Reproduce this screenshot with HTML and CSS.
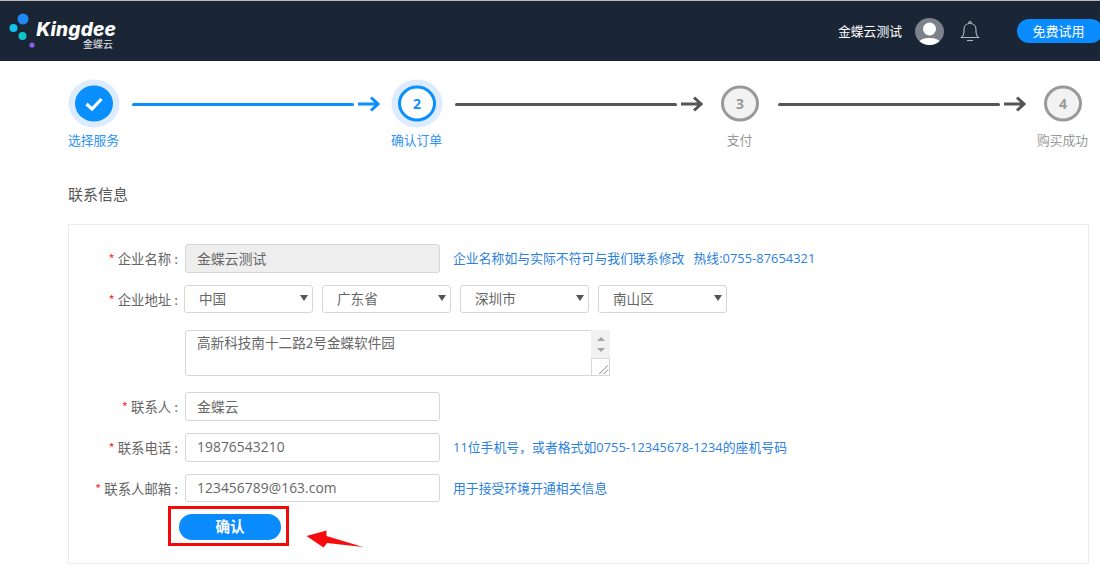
FILE: index.html
```html
<!DOCTYPE html>
<html lang="zh-CN">
<head>
<meta charset="utf-8">
<title>确认订单</title>
<link rel="stylesheet" href="styles.css">
</head>
<body>
<header class="topbar">
  <div class="brand">
    <svg class="brand-dots" width="36" height="41" viewBox="0 0 36 41">
      <circle cx="22" cy="11" r="5.5" fill="#2088f2"/>
      <circle cx="12.500" cy="20" r="4" fill="#0fc4f0"/>
      <circle cx="21.500" cy="28" r="4" fill="#0cc7c9"/>
      <circle cx="31" cy="37" r="2.600" fill="#8a5cf0"/>
    </svg>
    <div class="brand-text">
      <span class="brand-name">Kingdee</span>
      <span class="brand-sub">金蝶云</span>
    </div>
  </div>
  <div class="topbar-right">
    <span class="user-name">金蝶云测试</span>
    <svg class="avatar" width="29" height="27" viewBox="0 0 29 27">
      <defs><clipPath id="av"><ellipse cx="14.500" cy="13.500" rx="14.500" ry="13.500"/></clipPath></defs>
      <ellipse cx="14.500" cy="13.500" rx="14.500" ry="13.500" fill="#7c818b"/>
      <g clip-path="url(#av)" fill="#fff">
        <circle cx="14.500" cy="11" r="6.500"/>
        <ellipse cx="14.500" cy="25" rx="11" ry="5"/>
      </g>
    </svg>
    <svg class="bell" width="20" height="21" viewBox="0 0 20 21" fill="none" stroke="#b4b8be" stroke-width="1.100">
      <path d="M1.500 16.500c1.500-1.200 2.500-2.700 2.500-5.500V8.500C4 5 6.500 2.500 10 2.500s6 2.500 6 6V11c0 2.800 1 4.300 2.500 5.500z"/>
      <path d="M8.700 2.500V1.700c0-.6.600-1.100 1.300-1.100s1.300.5 1.300 1.100v.8"/>
      <path d="M7 19.500h6"/>
    </svg>
    <button class="trial-btn" type="button">免费试用</button>
  </div>
</header>

<main class="content">
  <ol class="stepper">
    <li class="step step-active">
      <svg class="step-icon" width="52" height="49" viewBox="0 0 52 49">
        <ellipse cx="26" cy="24.500" rx="25.500" ry="24" fill="#dcecfe"/>
        <ellipse cx="26" cy="24.500" rx="19" ry="18" fill="#0a8fff"/>
        <path d="M18.500 25l5.500 5 9.500-10" fill="none" stroke="#fff" stroke-width="3.200"/>
      </svg>
      <span class="step-label">选择服务</span>
    </li>
    <li class="connector connector-blue">
      <span class="connector-line"></span>
      <svg width="22" height="16" viewBox="0 0 22 16" fill="none" stroke="currentColor" stroke-width="3"><path d="M0 8h20M13 1.500L20 8l-7 6.500"/></svg>
    </li>
    <li class="step step-active">
      <svg class="step-icon" width="52" height="49" viewBox="0 0 52 49">
        <ellipse cx="26" cy="24.500" rx="25.500" ry="24" fill="#dcecfe"/>
        <ellipse cx="26" cy="24.500" rx="17.500" ry="16.500" fill="#fff" stroke="#0a8fff" stroke-width="3"/>
        <text x="26" y="29.500" class="step-num step-num-blue">2</text>
      </svg>
      <span class="step-label">确认订单</span>
    </li>
    <li class="connector">
      <span class="connector-line"></span>
      <svg width="22" height="16" viewBox="0 0 22 16" fill="none" stroke="currentColor" stroke-width="3"><path d="M0 8h20M13 1.500L20 8l-7 6.500"/></svg>
    </li>
    <li class="step">
      <svg class="step-icon" width="52" height="49" viewBox="0 0 52 49">
        <ellipse cx="26" cy="24.500" rx="17.500" ry="16.500" fill="#f2f2f2" stroke="#999" stroke-width="3"/>
        <text x="26" y="29.500" class="step-num">3</text>
      </svg>
      <span class="step-label">支付</span>
    </li>
    <li class="connector">
      <span class="connector-line"></span>
      <svg width="22" height="16" viewBox="0 0 22 16" fill="none" stroke="currentColor" stroke-width="3"><path d="M0 8h20M13 1.500L20 8l-7 6.500"/></svg>
    </li>
    <li class="step">
      <svg class="step-icon" width="52" height="49" viewBox="0 0 52 49">
        <ellipse cx="26" cy="24.500" rx="17.500" ry="16.500" fill="#f2f2f2" stroke="#999" stroke-width="3"/>
        <text x="26" y="29.500" class="step-num">4</text>
      </svg>
      <span class="step-label">购买成功</span>
    </li>
  </ol>

  <h2 class="section-title">联系信息</h2>

  <form class="card">
    <div class="row">
      <label class="label"><em>*</em> 企业名称 :</label>
      <input class="field field-disabled" value="金蝶云测试" readonly>
      <span class="hint">企业名称如与实际不符可与我们联系修改<span class="hint-gap">热线:0755-87654321</span></span>
    </div>
    <div class="row">
      <label class="label"><em>*</em> 企业地址 :</label>
      <div class="selects">
        <div class="select-wrap"><select class="select"><option>中国</option></select></div>
        <div class="select-wrap"><select class="select"><option>广东省</option></select></div>
        <div class="select-wrap"><select class="select"><option>深圳市</option></select></div>
        <div class="select-wrap"><select class="select"><option>南山区</option></select></div>
      </div>
    </div>
    <div class="row row-area">
      <span class="label"></span>
      <div class="area-wrap">
        <textarea class="area" readonly>高新科技南十二路2号金蝶软件园</textarea>
        <div class="scrollbar">
          <div class="scroll-track"><i class="tri-up"></i><i class="tri-down"></i></div>
          <svg class="resizer" width="19" height="18" viewBox="0 0 19 18" fill="none" stroke="#777"><path d="M8 17L18 7M13 17l5-5"/></svg>
        </div>
      </div>
    </div>
    <div class="row row-contact">
      <label class="label"><em>*</em> 联系人 :</label>
      <input class="field" value="金蝶云">
    </div>
    <div class="row">
      <label class="label"><em>*</em> 联系电话 :</label>
      <input class="field" value="19876543210">
      <span class="hint">11位手机号，或者格式如0755-12345678-1234的座机号码</span>
    </div>
    <div class="row">
      <label class="label"><em>*</em> 联系人邮箱 :</label>
      <input class="field field-short" value="123456789@163.com">
      <span class="hint">用于接受环境开通相关信息</span>
    </div>
    <div class="actions">
      <button class="confirm" type="button">确认</button>
      <span class="highlight"></span>
      <svg class="pointer" width="58" height="18" viewBox="0 0 58 18"><path d="M.5 6L20.500.5V6L57 17 21 13l-3.500 4.500z" fill="#f60c0c"/></svg>
    </div>
  </form>
</main>
</body>
</html>
```

FILE: styles.css
```css
* { box-sizing: border-box; }
html, body { margin: 0; height: 100%; }
body {
  width: 1100px;
  height: 565px;
  overflow: hidden;
  background: #fff;
  font-family: "Noto Sans CJK SC", "Open Sans", sans-serif;
  color: #666;
}

.topbar {
  height: 61px;
  border-top: 1px solid #b9b9b9;
  background: #1a2535;
  display: flex;
  align-items: center;
  justify-content: space-between;
  overflow: hidden;
}
.brand { display: flex; align-items: flex-start; align-self: flex-start; margin-top: 7px; padding-left: 1px; }
.brand-dots { display: block; }
.brand-text { display: flex; flex-direction: column; align-items: flex-end; width: 80px; margin-top: 13px; margin-left: -1px; }
.brand-name {
  font-family: "Inter", sans-serif;
  font-weight: 800;
  font-style: italic;
  font-size: 19px;
  letter-spacing: .2px;
  line-height: 18px;
  color: #fff;
}
.brand-sub { font-size: 10px; line-height: 10px; color: #e6e8ea; margin-right: 3px; }

.topbar-right { display: flex; align-items: center; }
.user-name { font-size: 12.800px; line-height: 18px; color: #fff; margin-right: 13px; }
.avatar { display: block; margin-right: 16px; }
.bell { display: block; margin-right: 37px; }
.trial-btn {
  width: 86px;
  height: 24px;
  margin-right: -3px;
  border: 0;
  border-radius: 12px;
  padding: 0 3px 0 0;
  background: #0a8cff;
  color: #fff;
  font-family: inherit;
  font-size: 13px;
  line-height: 24px;
}

.content { padding: 18px 11px 0 68px; }

.stepper { display: flex; list-style: none; margin: 0; padding: 0; }
.step { width: 52px; display: flex; flex-direction: column; align-items: center; flex: none; }
.step-icon { display: block; }
.step-num { font-family: "Open Sans", sans-serif; font-size: 14px; font-weight: 700; text-anchor: middle; fill: #999; }
.step-num-blue { fill: #0a8fff; }
.step-label { margin: 2px 1px 0 0; font-size: 12.800px; line-height: 20px; color: #999; white-space: nowrap; }
.step-active .step-label { color: #2f93f5; }

.connector {
  width: 271px;
  height: 49px;
  flex: none;
  display: flex;
  align-items: center;
  gap: 4px;
  padding: 1px 11px 0 12px;
  color: #555;
}
.connector-blue { color: #0a8fff; }
.connector-line { display: block; width: 222px; height: 3px; background: currentColor; border-radius: 2px; }
.connector svg { display: block; flex: none; }

.section-title { margin: 33px 0 0; font-size: 15px; font-weight: 400; line-height: 22px; color: #555; }

.card {
  margin-top: 19px;
  width: 1021px;
  height: 340px;
  border: 1px solid #e8edf2;
  padding: 19px 0 0;
  display: flex;
  flex-direction: column;
  gap: 12px;
}
.row { display: flex; align-items: center; }
.row-area { margin-top: 5px; align-items: flex-start; }
.row-contact { margin-top: 4px; }

.label {
  width: 109px;
  flex: none;
  margin-right: 7px;
  padding-bottom: 1px;
  text-align: right;
  font-size: 13.400px;
  line-height: 20px;
  color: #666;
  white-space: nowrap;
}
.label em { font-style: normal; color: #f33; }

.field {
  width: 255px;
  height: 29px;
  padding: 0 11px 2px;
  border: 1px solid #d6d6d6;
  border-radius: 3px;
  background: #fff;
  font-family: "Open Sans", "Noto Sans CJK SC", sans-serif;
  font-size: 13.800px;
  letter-spacing: .08px;
  color: #666;
  outline: none;
}
.field-short { height: 28px; }
.field-disabled { background: #eee; }

.hint {
  margin-left: 13px;
  padding-bottom: 1px;
  font-family: "Open Sans", "Noto Sans CJK SC", sans-serif;
  font-size: 12.800px;
  letter-spacing: .06px;
  line-height: 18px;
  color: #2b7fe0;
  white-space: nowrap;
}
.hint-gap { margin-left: 9px; }

.selects { display: flex; gap: 9px; margin-left: -1px; }
.select-wrap { position: relative; width: 129px; height: 28px; }
.select-wrap::after {
  content: "";
  position: absolute;
  right: 5px;
  top: 10px;
  border-style: solid;
  border-width: 6px 4px 0;
  border-color: #555 transparent transparent;
  pointer-events: none;
}
.select {
  appearance: none;
  width: 100%;
  height: 100%;
  padding: 0 20px 2px 14px;
  border: 1px solid #d6d6d6;
  border-radius: 3px;
  background: #fff;
  font-family: inherit;
  font-size: 13.600px;
  color: #666;
  outline: none;
}

.area-wrap { position: relative; width: 425px; height: 46px; }
.area {
  display: block;
  width: 100%;
  height: 100%;
  padding: 1px 11px;
  border: 1px solid #d6d6d6;
  border-radius: 3px;
  resize: none;
  overflow: hidden;
  font-family: inherit;
  font-size: 13.600px;
  line-height: 20px;
  color: #666;
  outline: none;
}
.scrollbar { position: absolute; right: 0; top: 0; width: 19px; height: 46px; display: flex; flex-direction: column; }
.scroll-track { height: 28px; background: #f1f1f1; display: flex; flex-direction: column; align-items: center; gap: 7px; padding-top: 7px; }
.tri-up { display: block; border-style: solid; border-width: 0 4px 4px; border-color: transparent transparent #a3a3a3; }
.tri-down { display: block; border-style: solid; border-width: 4px 4px 0; border-color: #a3a3a3 transparent transparent; }
.resizer { display: block; background: #fff; border: 1px solid #d6d6d6; }

.actions { position: relative; height: 26px; padding-left: 110px; }
.confirm {
  display: block;
  width: 102px;
  height: 26px;
  border: 0;
  border-radius: 13px;
  padding: 0 0 3px;
  background: #0a8cff;
  color: #fff;
  font-family: inherit;
  font-size: 14.500px;
  font-weight: 700;
  line-height: 23px;
}
.highlight { position: absolute; left: 99px; top: -8px; width: 121px; height: 40px; border: 3px solid #f20a0a; }
.pointer { position: absolute; left: 237px; top: 16px; }
```
